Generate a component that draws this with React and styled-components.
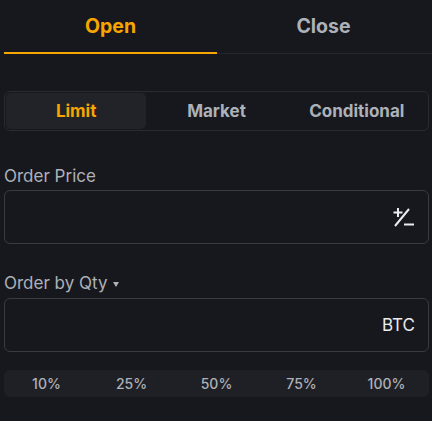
import React, { useState } from "react";
import styled, { createGlobalStyle } from "styled-components";

const GlobalStyle = createGlobalStyle`
  html, body {
    margin: 0;
    padding: 0;
    background: #17181e;
  }
  body {
    font-family: "Inter", "Noto Sans", sans-serif;
  }
`;

const Panel = styled.div`
  width: 432px;
  height: 421px;
  background: #17181e;
  padding: 0 3px 0 4px;
  box-sizing: border-box;
  display: flex;
  flex-direction: column;
`;

const TabBar = styled.div`
  display: flex;
  height: 53px;
  border-bottom: 1px solid #25262c;
  margin-right: -3px;
`;

const Tab = styled.div`
  flex: 0 0 213px;
  display: flex;
  align-items: center;
  justify-content: center;
  font-size: 19.5px;
  font-weight: 700;
  color: ${(p) => (p.$active ? "#f7a600" : "#adb1b8")};
  border-bottom: 2px solid ${(p) => (p.$active ? "#f7a600" : "transparent")};
  margin-bottom: -1px;
  cursor: pointer;
`;

const Segmented = styled.div`
  margin-top: 37px;
  height: 40px;
  border: 1px solid #2a2b31;
  border-radius: 6px;
  padding: 1px;
  box-sizing: border-box;
  display: flex;
`;

const Segment = styled.div`
  flex: 1;
  display: flex;
  align-items: center;
  justify-content: center;
  border-radius: 5px;
  font-size: 17px;
  font-weight: 700;
  background: ${(p) => (p.$active ? "#222329" : "transparent")};
  color: ${(p) => (p.$active ? "#f7a600" : "#adb1b8")};
  cursor: pointer;
`;

const Label = styled.div`
  margin-top: ${(p) => p.$top}px;
  height: 20px;
  display: flex;
  align-items: center;
  gap: 6px;
  font-size: 17px;
  color: #adb1b8;
`;

const Caret = styled.span`
  width: 0;
  height: 0;
  border-left: 3.5px solid transparent;
  border-right: 3.5px solid transparent;
  border-top: 5px solid #adb1b8;
  margin-top: 2px;
`;

const InputBox = styled.div`
  margin-top: ${(p) => p.$top}px;
  height: 54px;
  border: 1px solid #3a3b41;
  border-radius: 6px;
  box-sizing: border-box;
  display: flex;
  align-items: center;
  justify-content: flex-end;
  padding-right: 13px;
`;

const Suffix = styled.span`
  font-size: 17px;
  color: #eaecef;
`;

const PercentRow = styled.div`
  margin-top: 18px;
  height: 27px;
  background: #1f2026;
  border-radius: 6px;
  display: flex;
`;

const Percent = styled.div`
  flex: 1;
  display: flex;
  align-items: center;
  justify-content: center;
  font-size: 14px;
  font-weight: 500;
  color: #adb1b8;
  cursor: pointer;
`;

function PlusMinusIcon() {
  return (
    <svg width="22" height="20" viewBox="0 0 22 20" fill="none">
      <path d="M0.5 5.5h9M5 1v9" stroke="#eaecef" strokeWidth="2" />
      <path d="M2 19L16 2" stroke="#eaecef" strokeWidth="2" />
      <path d="M11 17.5h10" stroke="#eaecef" strokeWidth="2" />
    </svg>
  );
}

export default function App() {
  const [side, setSide] = useState("Open");
  const [type, setType] = useState("Limit");

  return (
    <>
      <GlobalStyle />
      <Panel>
        <TabBar>
          {["Open", "Close"].map((t) => (
            <Tab key={t} $active={side === t} onClick={() => setSide(t)}>
              {t}
            </Tab>
          ))}
        </TabBar>
        <Segmented>
          {["Limit", "Market", "Conditional"].map((t) => (
            <Segment key={t} $active={type === t} onClick={() => setType(t)}>
              {t}
            </Segment>
          ))}
        </Segmented>
        <Label $top={35}>Order Price</Label>
        <InputBox $top={4}>
          <PlusMinusIcon />
        </InputBox>
        <Label $top={29}>
          Order by Qty <Caret />
        </Label>
        <InputBox $top={5}>
          <Suffix>BTC</Suffix>
        </InputBox>
        <PercentRow>
          {["10%", "25%", "50%", "75%", "100%"].map((p) => (
            <Percent key={p}>{p}</Percent>
          ))}
        </PercentRow>
      </Panel>
    </>
  );
}
